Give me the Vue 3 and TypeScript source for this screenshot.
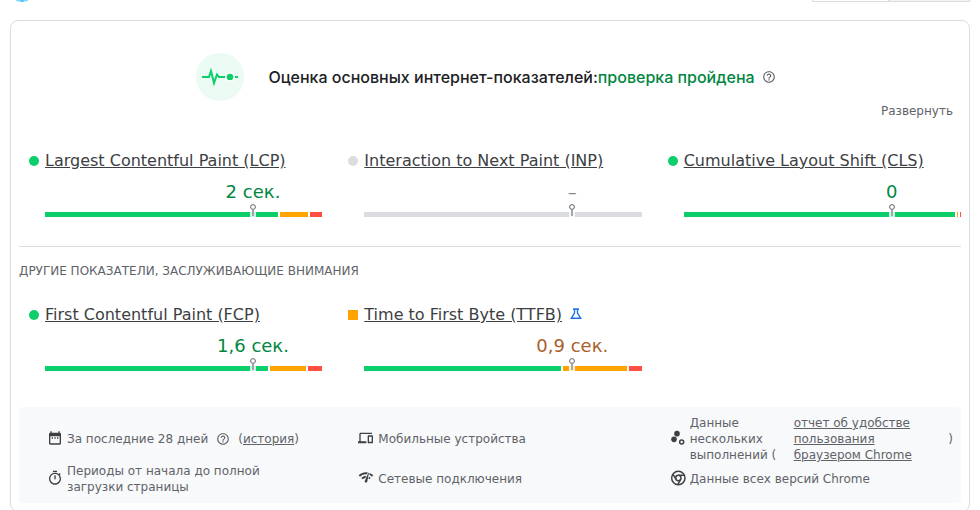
<script setup lang="ts">
interface Segment {
  tone: string
  share: number
}

interface Metric {
  name: string
  value: string
  status: 'good' | 'average' | 'none'
  experimental?: boolean
  segments: Segment[]
}

const coreMetrics: Metric[] = [
  {
    name: 'Largest Contentful Paint (LCP)',
    value: '2 сек.',
    status: 'good',
    segments: [
      { tone: 'good', share: 233 },
      { tone: 'average', share: 28 },
      { tone: 'poor', share: 12 },
    ],
  },
  {
    name: 'Interaction to Next Paint (INP)',
    value: '–',
    status: 'none',
    segments: [{ tone: 'none', share: 1 }],
  },
  {
    name: 'Cumulative Layout Shift (CLS)',
    value: '0',
    status: 'good',
    segments: [
      { tone: 'good', share: 272 },
      { tone: 'average', share: 1 },
      { tone: 'poor', share: 1 },
    ],
  },
]

const otherMetrics: Metric[] = [
  {
    name: 'First Contentful Paint (FCP)',
    value: '1,6 сек.',
    status: 'good',
    segments: [
      { tone: 'good', share: 223 },
      { tone: 'average', share: 36 },
      { tone: 'poor', share: 14 },
    ],
  },
  {
    name: 'Time to First Byte (TTFB)',
    value: '0,9 сек.',
    status: 'average',
    experimental: true,
    segments: [
      { tone: 'good', share: 197 },
      { tone: 'average', share: 64 },
      { tone: 'poor', share: 13 },
    ],
  },
]

const sections = [
  { id: 'core', title: '', metrics: coreMetrics },
  { id: 'other', title: 'Другие показатели, заслуживающие внимания', metrics: otherMetrics },
]

const helpPath =
  'M11 18h2v-2h-2v2zm1-16C6.48 2 2 6.48 2 12s4.48 10 10 10 10-4.48 10-10S17.52 2 12 2zm0 18c-4.41 0-8-3.59-8-8s3.59-8 8-8 8 3.59 8 8-3.59 8-8 8zm0-14c-2.21 0-4 1.79-4 4h2c0-1.1.9-2 2-2s2 .9 2 2c0 2-3 1.75-3 5h2c0-2.25 3-2.5 3-5 0-2.21-1.79-4-4-4z'
</script>

<template>
  <div class="page">
    <div class="topbar">
      <svg class="globe" viewBox="0 0 24 24" aria-hidden="true">
        <circle cx="12" cy="12" r="12" fill="#5bc8fb" />
        <path d="M9 0v24M15 0v24" stroke="#c9ecff" stroke-width="1" />
      </svg>
      <div class="tabs">
        <span class="tab"></span>
        <span class="tab tab-active"></span>
      </div>
    </div>

    <main class="card">
      <header class="summary">
        <svg class="pulse" viewBox="0 0 48 48" aria-hidden="true">
          <circle cx="24" cy="24" r="24" fill="#ebfaf3" />
          <path d="M6 24h7l2-6 3 12 3-8.500 2 2.500h6.500" fill="none" stroke="#0cce6b" stroke-width="2" />
          <circle cx="34" cy="24" r="5" fill="#fff" />
          <circle cx="34" cy="24" r="3.300" fill="#0cce6b" />
          <path d="M39 24h3" stroke="#0cce6b" stroke-width="2" />
        </svg>
        <h1 class="verdict">Оценка основных интернет-показателей:<span class="passed">проверка пройдена</span></h1>
        <button class="help" type="button" aria-label="?">
          <svg viewBox="0 0 24 24"><path :d="helpPath" /></svg>
        </button>
      </header>

      <div class="toolbar">
        <button class="expand" type="button">Развернуть</button>
      </div>

      <section v-for="section in sections" :key="section.id" class="section" :class="section.id">
        <h2 v-if="section.title" class="section-title">{{ section.title }}</h2>
        <div class="metrics">
          <article v-for="metric in section.metrics" :key="metric.name" class="metric">
            <span class="status" :class="'status-' + metric.status"></span>
            <h3 class="metric-name">
              <a href="#">{{ metric.name }}</a>
              <svg v-if="metric.experimental" class="flask" viewBox="0 0 12 12" aria-hidden="true">
                <path d="M3 1h6M4.500 1v4L1.300 10.300h9.400L7.500 5V1" fill="none" stroke="#1a73e8" stroke-width="1.400" />
              </svg>
            </h3>
            <div class="gauge">
              <div class="value" :class="'value-' + metric.status">{{ metric.value }}</div>
              <div class="bar">
                <span
                  v-for="segment in metric.segments"
                  :key="segment.tone"
                  class="segment"
                  :class="'segment-' + segment.tone"
                  :style="{ flexGrow: segment.share }"
                ></span>
                <svg class="marker" viewBox="0 0 6 13" aria-hidden="true">
                  <path d="M0 8h6v5H0z" fill="#fff" fill-opacity=".8" />
                  <path d="M2 6h2v6H2z" fill="#9aa0a6" fill-opacity=".9" />
                  <circle cx="3" cy="3" r="2.400" fill="#fff" stroke="#5f6368" />
                </svg>
              </div>
            </div>
          </article>
        </div>
      </section>

      <footer class="details">
        <div class="detail">
          <svg class="icon" viewBox="0 0 24 24" aria-hidden="true">
            <path d="M5 4V2h2v2h10V2h2v2c1.100 0 2 .9 2 2v14c0 1.100-.9 2-2 2H5c-1.100 0-2-.9-2-2V6c0-1.100.9-2 2-2zm0 5.500V20h14V9.500H5zM7 11h2v2H7zm4 0h2v2h-2zm4 0h2v2h-2z" fill-rule="evenodd" />
          </svg>
          <span>За последние 28 дней</span>
          <button class="help help-inline" type="button" aria-label="?">
            <svg viewBox="0 0 24 24"><path :d="helpPath" /></svg>
          </button>
          <span>(<a href="#">история</a>)</span>
        </div>
        <div class="detail">
          <svg class="icon" viewBox="0 0 24 24" aria-hidden="true">
            <path d="M4 6h17V4H4c-1.100 0-2 .9-2 2v11H0v3h12.500v-3H4V6zm17.500 2h-6c-.55 0-1 .45-1 1v10c0 .55.45 1 1 1h6c.55 0 1-.45 1-1V9c0-.55-.45-1-1-1zm-1 9.500h-4V10h4v7.500z" />
          </svg>
          <span>Мобильные устройства</span>
        </div>
        <div class="detail">
          <svg class="icon" viewBox="0 0 24 24" aria-hidden="true">
            <circle cx="10.500" cy="5.500" r="4.200" />
            <circle cx="6" cy="14" r="4.200" />
            <circle cx="17.500" cy="18" r="3" fill="none" stroke="#3c4043" stroke-width="2.200" />
          </svg>
          <span class="runs">Данные нескольких выполнений (</span>
          <a class="report" href="#">отчет об удобстве пользования браузером Chrome</a>
          <span class="closing">)</span>
        </div>
        <div class="detail">
          <svg class="icon" viewBox="0 0 24 24" aria-hidden="true">
            <path d="M15 1H9v2h6V1zm-4 13h2V8h-2v6zm8.030-6.610l1.420-1.420c-.43-.51-.9-.99-1.410-1.410l-1.420 1.420C16.070 4.740 14.120 4 12 4c-4.970 0-9 4.030-9 9s4.020 9 9 9 9-4.030 9-9c0-2.120-.74-4.070-1.970-5.610zM12 20c-3.870 0-7-3.130-7-7s3.130-7 7-7 7 3.130 7 7-3.130 7-7 7z" />
          </svg>
          <span class="period">Периоды от начала до полной загрузки страницы</span>
        </div>
        <div class="detail">
          <svg class="icon" viewBox="0 0 24 24" aria-hidden="true">
            <path d="M15.900 5c-.17 0-.32.09-.41.23l-.07.15-5.180 11.650c-.16.29-.26.61-.26.96 0 1.110.9 2.010 2.010 2.010.96 0 1.770-.68 1.960-1.590l.01-.03L16.400 5.500c0-.28-.22-.5-.5-.5zM1 9l2 2c2.880-2.880 6.790-4.080 10.530-3.620l1.190-2.680C9.890 3.840 4.740 5.270 1 9zm20 2l2-2c-1.640-1.640-3.550-2.820-5.590-3.570l-.53 2.820c1.500.62 2.900 1.530 4.120 2.750zm-4 4l2-2c-.8-.8-1.700-1.420-2.660-1.890l-.55 2.920c.42.27.83.59 1.210.97zM5 13l2 2c1.130-1.130 2.560-1.790 4.030-2l1.280-2.880c-2.630-.08-5.300.87-7.310 2.880z" transform="translate(0 -1)" />
          </svg>
          <span>Сетевые подключения</span>
        </div>
        <div class="detail">
          <svg class="icon" viewBox="0 0 24 24" aria-hidden="true">
            <g fill="none" stroke="#3c4043" stroke-width="2.200">
              <circle cx="12.500" cy="12" r="10" />
              <circle cx="12.500" cy="12" r="4" />
              <path d="M12.500 8h9M9 14L4.500 6.200M16 14L11.500 22" />
            </g>
          </svg>
          <span>Данные всех версий Chrome</span>
        </div>
      </footer>
    </main>
  </div>
</template>

<style>
html,
body {
  overflow: hidden;
  background: #fff;
}
</style>

<style scoped>
.page {
  padding: 0 10px;
  font-family: 'DejaVu Sans', sans-serif;
  font-size: 12px;
  line-height: 16px;
  color: #5f6368;
}

h1,
h2,
h3 {
  margin: 0;
  font-weight: 400;
}

a {
  color: inherit;
}

button {
  padding: 0;
  border: 0;
  background: none;
  color: inherit;
  font: inherit;
  cursor: pointer;
}

.topbar {
  display: flex;
  justify-content: space-between;
  align-items: flex-end;
  height: 2px;
  overflow: hidden;
}

.globe {
  width: 24px;
  height: 24px;
  flex: none;
}

.tabs {
  display: flex;
}

.tab {
  box-sizing: border-box;
  width: 77px;
  height: 36px;
  border: 1px solid #dadce0;
}

.tab-active {
  width: 81px;
  background: #f1f3f4;
}

.card {
  margin-top: 18px;
  padding: 32px 8px 8px;
  border: 1px solid #dadce0;
  border-radius: 8px;
}

.summary {
  display: flex;
  align-items: center;
  justify-content: center;
  padding-right: 8px;
}

.pulse {
  width: 48px;
  height: 48px;
  margin-right: 24px;
}

.verdict {
  font-family: Inter, sans-serif;
  font-size: 16px;
  font-weight: 500;
  line-height: 24px;
  color: #202124;
}

.passed {
  color: #018642;
}

.help {
  display: flex;
  margin-left: 7px;
}

.help svg {
  width: 14px;
  height: 14px;
  fill: #5f6368;
}

.toolbar {
  display: flex;
  justify-content: flex-end;
  padding: 2px 8px 0;
}

.core {
  padding-top: 31px;
  padding-bottom: 29px;
  border-bottom: 1px solid #dadce0;
}

.other {
  padding-top: 16px;
  padding-bottom: 36px;
}

.section-title {
  margin-bottom: 25px;
  font-size: 12px;
  line-height: 16px;
  text-transform: uppercase;
}

.metrics {
  display: grid;
  grid-template-columns: repeat(3, 1fr);
  column-gap: 26px;
  padding-left: 10px;
}

.metric {
  display: grid;
  grid-template-columns: 10px 1fr;
  column-gap: 6px;
  align-items: center;
}

.status {
  height: 10px;
  border-radius: 50%;
}

.status-good {
  background: #0cce6b;
}

.status-average {
  border-radius: 0;
  background: #ffa400;
}

.status-none {
  background: #dadce0;
}

.metric-name {
  display: flex;
  align-items: center;
  gap: 8px;
  font-size: 16px;
  line-height: 22px;
  color: #3c4043;
}

.flask {
  width: 12px;
  height: 12px;
  margin-bottom: 2px;
}

.gauge {
  grid-column: 2;
}

.value {
  height: 40px;
  padding-left: 50%;
  font-size: 18px;
  line-height: 40px;
  text-align: center;
}

.value-good {
  color: #018642;
}

.value-average {
  color: #aa5f2c;
}

.value-none {
  color: #80868b;
}

.bar {
  position: relative;
  display: flex;
  gap: 2px;
  height: 5px;
}

.segment {
  flex: 1 1 0;
  min-width: 1px;
}

.segment-good {
  background: #0cce6b;
}

.segment-average {
  background: #ffa400;
}

.segment-poor {
  background: #ff4e42;
}

.segment-none {
  background: #dadce0;
}

.marker {
  position: absolute;
  bottom: 0;
  left: 75%;
  width: 6px;
  height: 13px;
  transform: translateX(-50%);
}

.details {
  display: grid;
  grid-template-columns: repeat(3, 1fr);
  column-gap: 28px;
  padding: 8px 8px 8px 28px;
  border-radius: 4px;
  background: #f8f9fb;
}

.detail {
  display: flex;
  align-items: center;
  min-height: 32px;
}

.icon {
  flex: none;
  width: 16px;
  height: 16px;
  margin-right: 4px;
  margin-bottom: 2px;
  fill: #3c4043;
}

.help-inline {
  margin: 0 8px;
}

.period {
  max-width: 216px;
}

.runs {
  flex: 0 0 104px;
}

.report {
  flex: 0 1 136px;
}

.closing {
  margin-left: auto;
}
</style>
